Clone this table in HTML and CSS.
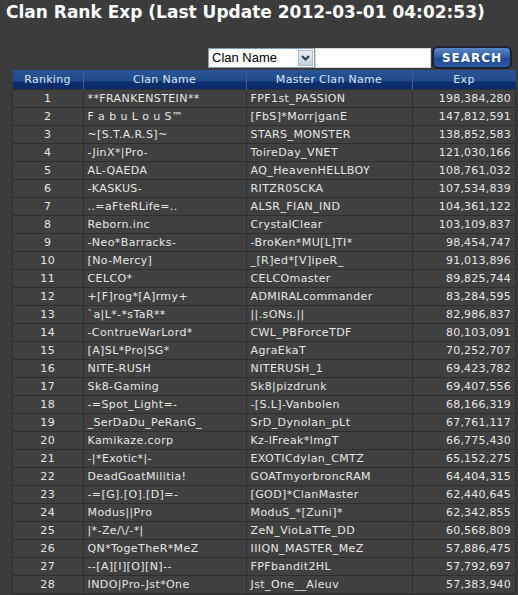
FILE: index.html
```html
<!DOCTYPE html>
<html>
<head>
<meta charset="utf-8">
<link rel="stylesheet" href="styles.css">
</head>
<body>
<div class="page">
  <h1 class="title">Clan Rank Exp (Last Update 2012-03-01 04:02:53)</h1>
  <div class="search">
    <div class="select"><span class="select-text">Clan Name</span><span class="select-arrow"><svg width="11" height="9" viewBox="0 0 11 9"><path d="M2 3 L5.5 6.5 L9 3" fill="none" stroke="#2a3550" stroke-width="2"/></svg></span></div>
    <div class="input"></div>
    <div class="btn">SEARCH</div>
  </div>
  <table class="rank">
    <thead>
      <tr><th class="c1">Ranking</th><th class="c2">Clan Name</th><th class="c3">Master Clan Name</th><th class="c4">Exp</th></tr>
    </thead>
    <tbody>
      <tr><td class="r">1</td><td>**FRANKENSTEIN**</td><td>FPF1st_PASSION</td><td class="e">198,384,280</td></tr>
      <tr><td class="r">2</td><td>F a b u L o u S™</td><td>[FbS]*Morr|ganE</td><td class="e">147,812,591</td></tr>
      <tr><td class="r">3</td><td>~[S.T.A.R.S]~</td><td>STARS_MONSTER</td><td class="e">138,852,583</td></tr>
      <tr><td class="r">4</td><td>-JinX*|Pro-</td><td>ToireDay_VNET</td><td class="e">121,030,166</td></tr>
      <tr><td class="r">5</td><td>AL-QAEDA</td><td>AQ_HeavenHELLBOY</td><td class="e">108,761,032</td></tr>
      <tr><td class="r">6</td><td>-KASKUS-</td><td>RITZR0SCKA</td><td class="e">107,534,839</td></tr>
      <tr><td class="r">7</td><td>..=aFteRLife=..</td><td>ALSR_FIAN_IND</td><td class="e">104,361,122</td></tr>
      <tr><td class="r">8</td><td>Reborn.inc</td><td>CrystalClear</td><td class="e">103,109,837</td></tr>
      <tr><td class="r">9</td><td>-Neo*Barracks-</td><td>-BroKen*MU[L]TI*</td><td class="e">98,454,747</td></tr>
      <tr><td class="r">10</td><td>[No-Mercy]</td><td>_[R]ed*[V]ipeR_</td><td class="e">91,013,896</td></tr>
      <tr><td class="r">11</td><td>CELCO*</td><td>CELCOmaster</td><td class="e">89,825,744</td></tr>
      <tr><td class="r">12</td><td>+[F]rog*[A]rmy+</td><td>ADMIRALcommander</td><td class="e">83,284,595</td></tr>
      <tr><td class="r">13</td><td>`a|L*-*sTaR**</td><td>||.sONs.||</td><td class="e">82,986,837</td></tr>
      <tr><td class="r">14</td><td>-ContrueWarLord*</td><td>CWL_PBForceTDF</td><td class="e">80,103,091</td></tr>
      <tr><td class="r">15</td><td>[A]SL*Pro|SG*</td><td>AgraEkaT</td><td class="e">70,252,707</td></tr>
      <tr><td class="r">16</td><td>NITE-RUSH</td><td>NITERUSH_1</td><td class="e">69,423,782</td></tr>
      <tr><td class="r">17</td><td>Sk8-Gaming</td><td>Sk8|pizdrunk</td><td class="e">69,407,556</td></tr>
      <tr><td class="r">18</td><td>-=Spot_Light=-</td><td>-[S.L]-Vanbolen</td><td class="e">68,166,319</td></tr>
      <tr><td class="r">19</td><td>_SerDaDu_PeRanG_</td><td>SrD_Dynolan_pLt</td><td class="e">67,761,117</td></tr>
      <tr><td class="r">20</td><td>Kamikaze.corp</td><td>Kz-lFreak*lmgT</td><td class="e">66,775,430</td></tr>
      <tr><td class="r">21</td><td>-|*Exotic*|-</td><td>EXOTICdylan_CMTZ</td><td class="e">65,152,275</td></tr>
      <tr><td class="r">22</td><td>DeadGoatMilitia!</td><td>GOATmyorbroncRAM</td><td class="e">64,404,315</td></tr>
      <tr><td class="r">23</td><td>-=[G].[O].[D]=-</td><td>[GOD]*ClanMaster</td><td class="e">62,440,645</td></tr>
      <tr><td class="r">24</td><td>Modus||Pro</td><td>ModuS_*[Zuni]*</td><td class="e">62,342,855</td></tr>
      <tr><td class="r">25</td><td>|*-Ze/\/-*|</td><td>ZeN_VioLaTTe_DD</td><td class="e">60,568,809</td></tr>
      <tr><td class="r">26</td><td>QN*TogeTheR*MeZ</td><td>IIIQN_MASTER_MeZ</td><td class="e">57,886,475</td></tr>
      <tr><td class="r">27</td><td>--[A][I][O][N]--</td><td>FPFbandit2HL</td><td class="e">57,792,697</td></tr>
      <tr><td class="r">28</td><td>INDO|Pro-Jst*One</td><td>Jst_One__Aleuv</td><td class="e">57,383,940</td></tr>
    </tbody>
  </table>
</div>
</body>
</html>
```

FILE: styles.css
```css
html, body {
  margin: 0;
  padding: 0;
  background: #3c3c3c;
}
.page {
  width: 518px;
  height: 595px;
  overflow: hidden;
  font-family: "DejaVu Sans", Verdana, sans-serif;
  color: #e6e6e6;
}
.title {
  margin: 0;
  padding: 2px 0 0 6px;
  height: 22px;
  font-size: 17px;
  font-weight: bold;
  color: #ffffff;
  white-space: nowrap;
}
.search {
  display: flex;
  align-items: center;
  justify-content: flex-end;
  padding: 22px 6px 0 0;
  height: 23px;
}
.select {
  width: 107px;
  height: 20px;
  background: #ffffff;
  border: 1px solid #7f9db9;
  box-sizing: border-box;
  display: flex;
  align-items: center;
  justify-content: space-between;
  font-family: "Liberation Sans", Arial, sans-serif;
  font-size: 13px;
  color: #000;
  padding-left: 3px;
}
.select-arrow {
  width: 15px;
  height: 16px;
  margin-right: 1px;
  background: linear-gradient(#e8ecf4, #c4cede);
  border: 1px solid #a9b8d0;
  box-sizing: border-box;
  display: flex;
  align-items: center;
  justify-content: center;
}
.input {
  width: 116px;
  height: 20px;
  background: #fff;
  box-sizing: border-box;
  border: 1px solid #d8d8d8;
}
.btn {
  margin-left: 1px;
  width: 80px;
  height: 23px;
  box-sizing: border-box;
  border: 2px solid #1c2230;
  border-radius: 6px;
  background: linear-gradient(#5a86c8, #2d5aa6 50%, #21498e 51%, #2a58a4);
  color: #ffffff;
  font-family: "DejaVu Sans", Verdana, sans-serif;
  font-weight: bold;
  font-size: 12px;
  letter-spacing: 1px;
  display: flex;
  align-items: center;
  justify-content: center;
}
.rank {
  margin: 1px 0 0 12px;
  width: 500px;
  border-collapse: collapse;
  font-size: 11px;
  table-layout: fixed;
}
.rank th {
  height: 19px;
  padding: 0;
  font-weight: normal;
  color: #d8e4f4;
  background: linear-gradient(#2a5594, #1f4a8a 60%, #0d2f6c 61%, #0c2c68);
  border-left: 1px solid #3a5f96;
  letter-spacing: 0.3px;
}
.rank th.c1 { width: 70px; border-left: none; }
.rank th.c2 { width: 162px; }
.rank th.c3 { width: 165px; }
.rank th.c4 { width: 103px; }
.rank td {
  height: 17px;
  padding: 0 0 0 4px;
  background: #404040;
  border: 1px solid #2e2e2e;
  white-space: nowrap;
  overflow: hidden;
  letter-spacing: 0.4px;
}
.rank td.r { text-align: center; padding: 0; }
.rank td.e { text-align: right; padding: 0 4px 0 0; letter-spacing: 0.2px; }
```
